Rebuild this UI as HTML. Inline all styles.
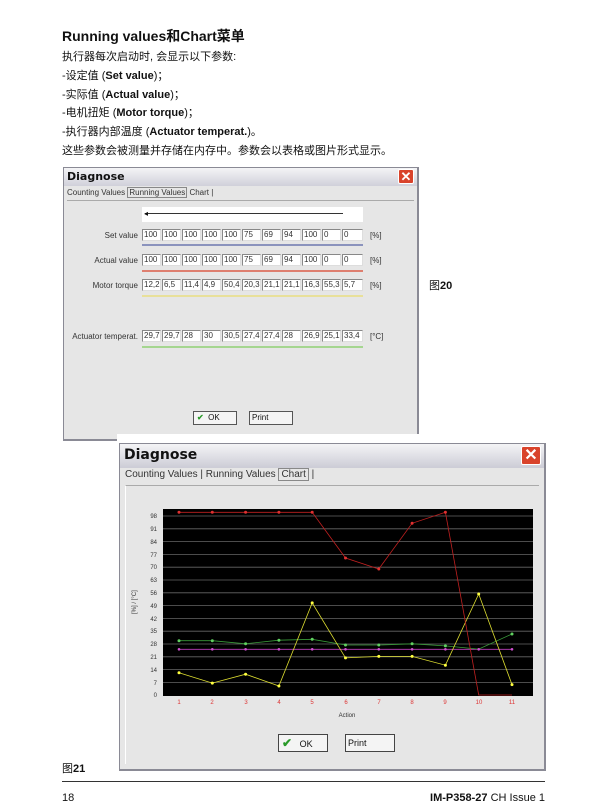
<!DOCTYPE html>
<html><head><meta charset="utf-8"><style>
*{margin:0;padding:0;box-sizing:border-box}
body{width:604px;height:812px;background:#fff;position:relative;font-family:"Liberation Sans","Noto Sans CJK SC",sans-serif;color:#111;overflow:hidden}
.a{position:absolute;white-space:nowrap}
.t{font-size:11px}
.cell{position:absolute;height:12px;border:1px solid #888;border-right-color:#ddd;border-bottom-color:#ddd;background:#fff;font-size:8px;line-height:10px;padding-left:1px;color:#333}
.lbl{position:absolute;font-size:8px;color:#333;text-align:right;width:80px}
.dt{font-family:"DejaVu Sans",sans-serif;font-weight:bold}
</style></head><body>
<div class="a" style="left:62px;top:26px;font-size:14px;font-weight:bold">Running values和Chart菜单</div>
<div class="a t" style="left:62px;top:48px">执行器每次启动时, 会显示以下参数:</div>
<div class="a t" style="left:62px;top:67px">-设定值 (<b>Set value</b>)；</div>
<div class="a t" style="left:62px;top:86px">-实际值 (<b>Actual value</b>)；</div>
<div class="a t" style="left:62px;top:104px">-电机扭矩 (<b>Motor torque</b>)；</div>
<div class="a t" style="left:62px;top:123px">-执行器内部温度 (<b>Actuator temperat.</b>)。</div>
<div class="a t" style="left:62px;top:142px">这些参数会被测量并存储在内存中。参数会以表格或图片形式显示。</div>

<!-- dialog 1 -->
<div class="a" style="left:63px;top:167px;width:356px;height:274px;background:#e6e6e6;border:1px solid #8a8a95;border-width:1px 2px 2px 1px">
 <div class="dt" style="height:18px;background:linear-gradient(#f4f4f6,#d0d0da);font-size:11px;padding:2px 3px">Diagnose</div>
 <div style="position:absolute;right:3px;top:1px;width:16px;height:15px;background:#d9432b;border:1px solid #fff;border-radius:2px;color:#fff;font-size:13px;line-height:13px;text-align:center;font-weight:bold">✕</div>
 <div style="position:absolute;left:3px;top:20px;font-size:8px;color:#333">Counting Values <span style="border:1px solid #888;padding:0 1px">Running Values</span> Chart |</div>
 <div style="position:absolute;left:3px;top:32px;right:3px;bottom:3px;border-top:1px solid #aaa"></div>
</div>
<div class="a" style="left:142px;top:207px;width:221px;height:15px;background:#fff"></div>
<div class="a" style="left:145px;top:213px;width:198px;height:1px;background:#333"></div>
<div class="a" style="left:144px;top:210px;font-size:8px;line-height:7px">◂</div>
<div class="a" style="left:142px;top:244px;width:221px;height:2px;background:#8b93bd"></div>
<div class="a" style="left:142px;top:270px;width:221px;height:2px;background:#de7f70"></div>
<div class="a" style="left:142px;top:295px;width:221px;height:2px;background:#e8e09a"></div>
<div class="a" style="left:142px;top:346px;width:221px;height:2px;background:#a5d690"></div>
<div class="a" style="left:193px;top:411px;width:44px;height:14px;border:1px solid #555;background:#f4f4f4;font-size:8px;line-height:12px;padding-left:3px"><span style="color:#2a9a2a;font-weight:bold">✔</span>&nbsp;&nbsp;OK</div>
<div class="a" style="left:249px;top:411px;width:44px;height:14px;border:1px solid #555;background:#f4f4f4;font-size:8px;line-height:12px;padding-left:2px">Print</div>
<div class="a t" style="left:429px;top:277px">图<b>20</b></div>

<!-- dialog 2 -->
<div class="a" style="left:117px;top:434px;width:432px;height:340px;background:#fff"></div>
<div class="a" style="left:119px;top:443px;width:427px;height:328px;background:#e6e6e6;border:1px solid #8a8a95;border-width:1px 2px 2px 1px">
 <div class="dt" style="height:24px;background:linear-gradient(#f4f4f6,#ccccd6);font-size:14px;padding:3px 4px">Diagnose</div>
 <div style="position:absolute;right:3px;top:2px;width:20px;height:19px;background:#d9432b;border:1px solid #fff;border-radius:2px;color:#fff;font-size:16px;line-height:17px;text-align:center;font-weight:bold">✕</div>
 <div style="position:absolute;left:5px;top:25px;font-size:10px;color:#333">Counting Values | Running Values <span style="border:1px solid #888;padding:0 2px">Chart</span> |</div>
 <div style="position:absolute;left:5px;top:41px;right:5px;bottom:5px;border-top:1px solid #aaa;border-left:1px solid #fff"></div>
</div>
<svg class="a" style="left:0;top:0" width="604" height="812">
 <rect x="163" y="509" width="370" height="187" fill="#000"/>
 <g stroke="#666" stroke-width="0.8">
 <line x1="163" x2="533" y1="516" y2="516"/><line x1="163" x2="533" y1="528.8" y2="528.8"/><line x1="163" x2="533" y1="541.6" y2="541.6"/><line x1="163" x2="533" y1="554.4" y2="554.4"/><line x1="163" x2="533" y1="567.2" y2="567.2"/><line x1="163" x2="533" y1="580" y2="580"/><line x1="163" x2="533" y1="592.8" y2="592.8"/><line x1="163" x2="533" y1="605.6" y2="605.6"/><line x1="163" x2="533" y1="618.4" y2="618.4"/><line x1="163" x2="533" y1="631.2" y2="631.2"/><line x1="163" x2="533" y1="644" y2="644"/><line x1="163" x2="533" y1="656.8" y2="656.8"/><line x1="163" x2="533" y1="669.6" y2="669.6"/><line x1="163" x2="533" y1="682.4" y2="682.4"/>
 </g>
 <g font-size="6" fill="#333" text-anchor="end" font-family="Liberation Sans">
 <text x="157" y="518">98</text><text x="157" y="531">91</text><text x="157" y="544">84</text><text x="157" y="557">77</text><text x="157" y="569">70</text><text x="157" y="582">63</text><text x="157" y="595">56</text><text x="157" y="608">49</text><text x="157" y="621">42</text><text x="157" y="633">35</text><text x="157" y="646">28</text><text x="157" y="659">21</text><text x="157" y="672">14</text><text x="157" y="685">7</text><text x="157" y="697">0</text>
 </g>
 <text transform="translate(136,614) rotate(-90)" font-size="6" fill="#333" font-family="Liberation Sans">[%] / [°C]</text>
 <g font-size="6" fill="#d33" text-anchor="middle" font-family="Liberation Sans">
 <text x="179" y="704">1</text><text x="212" y="704">2</text><text x="246" y="704">3</text><text x="279" y="704">4</text><text x="312" y="704">5</text><text x="346" y="704">6</text><text x="379" y="704">7</text><text x="412" y="704">8</text><text x="445" y="704">9</text><text x="479" y="704">10</text><text x="512" y="704">11</text>
 </g>
 <text x="347" y="717" font-size="6" fill="#333" text-anchor="middle" font-family="Liberation Sans">Action</text>
 <polyline fill="none" stroke="#c040c0" stroke-width="0.8" points="179,649.3 512,649.3"/>
 <polyline fill="none" stroke="#3a9a3a" stroke-width="0.8" points="179,640.7 212.3,640.7 245.6,643.8 278.9,640.2 312.2,639.3 345.5,645 378.8,645 412.1,643.8 445.4,645.9 478.7,649.1 512,634"/>
 <polyline fill="none" stroke="#dede30" stroke-width="0.8" points="179,672.7 212.3,683.1 245.6,674.2 278.9,686 312.2,602.9 345.5,657.9 378.8,656.4 412.1,656.4 445.4,665.2 478.7,594 512,684.6"/>
 <polyline fill="none" stroke="#c02020" stroke-width="0.8" points="179,512.3 212.3,512.3 245.6,512.3 278.9,512.3 312.2,512.3 345.5,558 378.8,569 412.1,523.3 445.4,512.3 478.7,695 512,695"/>
 <g fill="#e03030"><circle cx="179" cy="512.3" r="1.5"/><circle cx="212.3" cy="512.3" r="1.5"/><circle cx="245.6" cy="512.3" r="1.5"/><circle cx="278.9" cy="512.3" r="1.5"/><circle cx="312.2" cy="512.3" r="1.5"/><circle cx="345.5" cy="558" r="1.5"/><circle cx="378.8" cy="569" r="1.5"/><circle cx="412.1" cy="523.3" r="1.5"/><circle cx="445.4" cy="512.3" r="1.5"/></g>
 <g fill="#ffff40"><circle cx="179" cy="672.7" r="1.5"/><circle cx="212.3" cy="683.1" r="1.5"/><circle cx="245.6" cy="674.2" r="1.5"/><circle cx="278.9" cy="686" r="1.5"/><circle cx="312.2" cy="602.9" r="1.5"/><circle cx="345.5" cy="657.9" r="1.5"/><circle cx="378.8" cy="656.4" r="1.5"/><circle cx="412.1" cy="656.4" r="1.5"/><circle cx="445.4" cy="665.2" r="1.5"/><circle cx="478.7" cy="594" r="1.5"/><circle cx="512" cy="684.6" r="1.5"/></g>
 <g fill="#60d060"><circle cx="179" cy="640.7" r="1.5"/><circle cx="212.3" cy="640.7" r="1.5"/><circle cx="245.6" cy="643.8" r="1.5"/><circle cx="278.9" cy="640.2" r="1.5"/><circle cx="312.2" cy="639.3" r="1.5"/><circle cx="345.5" cy="645" r="1.5"/><circle cx="378.8" cy="645" r="1.5"/><circle cx="412.1" cy="643.8" r="1.5"/><circle cx="445.4" cy="645.9" r="1.5"/><circle cx="512" cy="634" r="1.5"/></g>
 <g fill="#d050d0"><circle cx="179" cy="649.3" r="1.3"/><circle cx="212.3" cy="649.3" r="1.3"/><circle cx="245.6" cy="649.3" r="1.3"/><circle cx="278.9" cy="649.3" r="1.3"/><circle cx="312.2" cy="649.3" r="1.3"/><circle cx="345.5" cy="649.3" r="1.3"/><circle cx="378.8" cy="649.3" r="1.3"/><circle cx="412.1" cy="649.3" r="1.3"/><circle cx="445.4" cy="649.3" r="1.3"/><circle cx="478.7" cy="649.3" r="1.3"/><circle cx="512" cy="649.3" r="1.3"/></g>
</svg>
<div class="a" style="left:278px;top:734px;width:50px;height:18px;border:1px solid #444;background:#f4f4f4;font-size:9px;line-height:16px;padding-left:3px"><span style="color:#2a9a2a;font-weight:bold;font-size:12px">✔</span>&nbsp;&nbsp;&nbsp;OK</div>
<div class="a" style="left:345px;top:734px;width:50px;height:18px;border:1px solid #444;background:#f4f4f4;font-size:9px;line-height:16px;padding-left:2px">Print</div>

<div class="a t" style="left:62px;top:760px">图<b>21</b></div>
<div class="a" style="left:62px;top:781px;width:483px;height:1px;background:#333"></div>
<div class="a t" style="left:62px;top:792px">18</div>
<div class="a t" style="right:59px;top:792px"><b>IM-P358-27</b> CH Issue 1</div>

<div class="a" style="left:0;top:0">
<div class="lbl" style="left:58px;top:231px">Set value</div>
<div class="lbl" style="left:58px;top:256px">Actual value</div>
<div class="lbl" style="left:58px;top:281px">Motor torque</div>
<div class="lbl" style="left:58px;top:332px">Actuator temperat.</div>
<div style="position:absolute;left:370px;top:231px;font-size:8px;color:#333">[%]</div>
<div style="position:absolute;left:370px;top:256px;font-size:8px;color:#333">[%]</div>
<div style="position:absolute;left:370px;top:281px;font-size:8px;color:#333">[%]</div>
<div style="position:absolute;left:370px;top:332px;font-size:8px;color:#333">[°C]</div>
<div class="cell" style="left:142px;top:229px;width:19px">100</div><div class="cell" style="left:162px;top:229px;width:19px">100</div><div class="cell" style="left:182px;top:229px;width:19px">100</div><div class="cell" style="left:202px;top:229px;width:19px">100</div><div class="cell" style="left:222px;top:229px;width:19px">100</div><div class="cell" style="left:242px;top:229px;width:19px">75</div><div class="cell" style="left:262px;top:229px;width:19px">69</div><div class="cell" style="left:282px;top:229px;width:19px">94</div><div class="cell" style="left:302px;top:229px;width:19px">100</div><div class="cell" style="left:322px;top:229px;width:19px">0</div><div class="cell" style="left:342px;top:229px;width:21px">0</div>
<div class="cell" style="left:142px;top:254px;width:19px">100</div><div class="cell" style="left:162px;top:254px;width:19px">100</div><div class="cell" style="left:182px;top:254px;width:19px">100</div><div class="cell" style="left:202px;top:254px;width:19px">100</div><div class="cell" style="left:222px;top:254px;width:19px">100</div><div class="cell" style="left:242px;top:254px;width:19px">75</div><div class="cell" style="left:262px;top:254px;width:19px">69</div><div class="cell" style="left:282px;top:254px;width:19px">94</div><div class="cell" style="left:302px;top:254px;width:19px">100</div><div class="cell" style="left:322px;top:254px;width:19px">0</div><div class="cell" style="left:342px;top:254px;width:21px">0</div>
<div class="cell" style="left:142px;top:279px;width:19px">12,2</div><div class="cell" style="left:162px;top:279px;width:19px">6,5</div><div class="cell" style="left:182px;top:279px;width:19px">11,4</div><div class="cell" style="left:202px;top:279px;width:19px">4,9</div><div class="cell" style="left:222px;top:279px;width:19px">50,4</div><div class="cell" style="left:242px;top:279px;width:19px">20,3</div><div class="cell" style="left:262px;top:279px;width:19px">21,1</div><div class="cell" style="left:282px;top:279px;width:19px">21,1</div><div class="cell" style="left:302px;top:279px;width:19px">16,3</div><div class="cell" style="left:322px;top:279px;width:19px">55,3</div><div class="cell" style="left:342px;top:279px;width:21px">5,7</div>
<div class="cell" style="left:142px;top:330px;width:19px">29,7</div><div class="cell" style="left:162px;top:330px;width:19px">29,7</div><div class="cell" style="left:182px;top:330px;width:19px">28</div><div class="cell" style="left:202px;top:330px;width:19px">30</div><div class="cell" style="left:222px;top:330px;width:19px">30,5</div><div class="cell" style="left:242px;top:330px;width:19px">27,4</div><div class="cell" style="left:262px;top:330px;width:19px">27,4</div><div class="cell" style="left:282px;top:330px;width:19px">28</div><div class="cell" style="left:302px;top:330px;width:19px">26,9</div><div class="cell" style="left:322px;top:330px;width:19px">25,1</div><div class="cell" style="left:342px;top:330px;width:21px">33,4</div>
</div>
</body></html>
